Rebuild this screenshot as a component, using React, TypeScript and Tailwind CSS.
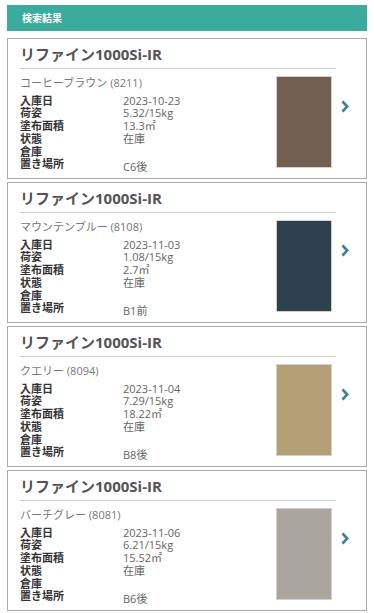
interface StockItem {
  colorName: string;
  code: string;
  swatch: string;
  date: string;
  packing: string;
  area: string;
  status: string;
  warehouse: string;
  place: string;
}

const items: StockItem[] = [
  {
    colorName: "コーヒーブラウン",
    code: "8211",
    swatch: "#725f52",
    date: "2023-10-23",
    packing: "5.32/15kg",
    area: "13.3㎡",
    status: "在庫",
    warehouse: "",
    place: "C6後",
  },
  {
    colorName: "マウンテンブルー",
    code: "8108",
    swatch: "#2c404d",
    date: "2023-11-03",
    packing: "1.08/15kg",
    area: "2.7㎡",
    status: "在庫",
    warehouse: "",
    place: "B1前",
  },
  {
    colorName: "クエリー",
    code: "8094",
    swatch: "#b3a077",
    date: "2023-11-04",
    packing: "7.29/15kg",
    area: "18.22㎡",
    status: "在庫",
    warehouse: "",
    place: "B8後",
  },
  {
    colorName: "バーチグレー",
    code: "8081",
    swatch: "#a9a59c",
    date: "2023-11-06",
    packing: "6.21/15kg",
    area: "15.52㎡",
    status: "在庫",
    warehouse: "",
    place: "B6後",
  },
];

const font = { fontFamily: '"Open Sans", "Noto Sans CJK JP", sans-serif' };

const Chevron = () => (
  <svg width="8" height="13" viewBox="0 0 8 13" fill="none">
    <polyline
      points="1.5,1.5 6.3,6.5 1.5,11.5"
      stroke="#3d7f9e"
      strokeWidth="2.6"
      strokeLinecap="butt"
      strokeLinejoin="miter"
    />
  </svg>
);

const StockCard = ({ item }: { item: StockItem }) => {
  const rows: [string, string][] = [
    ["入庫日", item.date],
    ["荷姿", item.packing],
    ["塗布面積", item.area],
    ["状態", item.status],
    ["倉庫", item.warehouse],
  ];

  return (
    <div className="h-[141px] border border-[#ababab] bg-white pl-[12px] pr-[12px] pt-[5px]">
      <div className="w-[316px] border-b border-[#cfcfcf] pb-[4px] text-[15px] font-bold leading-[20px] text-[#555]">
        リファイン1000Si-IR
      </div>
      <div className="flex">
        <div className="w-[256px] pt-[8px] text-[11px] leading-[12.7px]">
          <div className="mb-[5px] text-[#777]">
            {item.colorName} ({item.code})
          </div>
          {rows.map(([label, value]) => (
            <div key={label} className="flex">
              <span className="w-[103px] font-semibold text-[#333]">{label}</span>
              <span className="text-[#666]">{value}</span>
            </div>
          ))}
          <div className="flex items-start">
            <span className="w-[103px] font-semibold text-[#333]">置き場所</span>
            <span className="mt-[3px] text-[#666]">{item.place}</span>
          </div>
        </div>
        <div
          className="mt-[7px] h-[92px] w-[56px] border border-[#d4cfca]"
          style={{ backgroundColor: item.swatch }}
        />
        <div className="flex flex-1 justify-center pl-[4px] pt-[31px]">
          <Chevron />
        </div>
      </div>
    </div>
  );
};

export default function App() {
  return (
    <div className="min-h-[613px] bg-white px-[7px] pt-[5px]" style={font}>
      <div className="mb-[7px] flex h-[26px] items-center bg-[#3aab9d] px-[15px] text-[10px] font-bold text-white">
        検索結果
      </div>
      <div className="flex flex-col gap-[3px]">
        {items.map((item) => (
          <StockCard key={item.code} item={item} />
        ))}
      </div>
    </div>
  );
}
